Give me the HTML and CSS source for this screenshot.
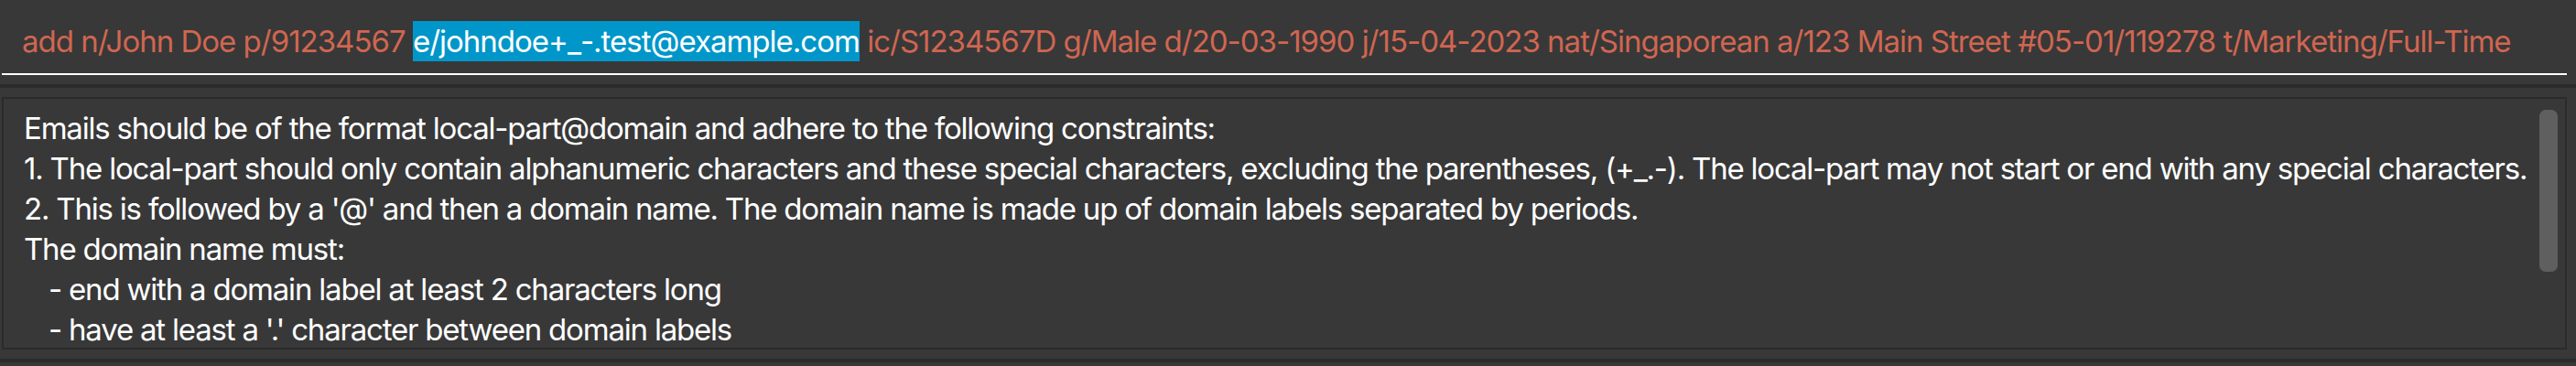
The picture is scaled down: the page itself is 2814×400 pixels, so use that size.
FILE: index.html
```html
<!DOCTYPE html>
<html>
<head>
<meta charset="utf-8">
<link rel="stylesheet" href="styles.css">
</head>
<body>
<div class="app">
  <div class="command-pane">
    <div class="command-field">
      <div class="command-text">add n/John Doe p/91234567 <span class="selected">e/johndoe+_-.test@example.com</span> ic/S1234567D g/Male d/20-03-1990 j/15-04-2023 nat/Singaporean a/123 Main Street #05-01/119278 t/Marketing/Full-Time</div>
    </div>
  </div>
  <div class="divider"></div>
  <div class="result-pane">
    <div class="result-box">
      <div class="result-text">
        <div class="line">Emails should be of the format local-part@domain and adhere to the following constraints:</div>
        <div class="line">1. The local-part should only contain alphanumeric characters and these special characters, excluding the parentheses, (+_.-). The local-part may not start or end with any special characters.</div>
        <div class="line">2. This is followed by a '@' and then a domain name. The domain name is made up of domain labels separated by periods.</div>
        <div class="line">The domain name must:</div>
        <div class="line indent">- end with a domain label at least 2 characters long</div>
        <div class="line indent">- have at least a '.' character between domain labels</div>
      </div>
      <div class="scroll-thumb"></div>
    </div>
  </div>
  <div class="divider"></div>
</div>
</body>
</html>
```
FILE: styles.css
```css
html, body {
  margin: 0;
  padding: 0;
  background: #383838;
}

body {
  width: 2814px;
  height: 400px;
  overflow: hidden;
  font-family: "Inter", "Noto Sans", sans-serif;
}

.app {
  display: flex;
  flex-direction: column;
}

.command-pane {
  height: 92px;
  padding: 0 10px 0 2px;
  box-sizing: border-box;
}

.command-field {
  height: 82px;
  box-sizing: border-box;
  border-bottom: 2px solid #ffffff;
  padding: 23px 0 0 22px;
}

.command-text {
  font-size: 33px;
  line-height: 44px;
  color: #d06651;
  white-space: nowrap;
  letter-spacing: -1px;
}

.selected {
  display: inline-block;
  background: #0096c9;
  color: #ffffff;
  line-height: 44px;
}

.divider {
  height: 4px;
  background: #2b2b2b;
}

.result-pane {
  padding: 10px 10px 10px 2px;
}

.result-box {
  position: relative;
  height: 276px;
  box-sizing: border-box;
  border: 2px solid #2b2b2b;
  padding: 10px 0 0 22px;
  overflow: hidden;
}

.result-text {
  font-size: 33px;
  line-height: 44px;
  color: #ffffff;
  letter-spacing: -1.2px;
}

.line {
  white-space: nowrap;
}

.indent {
  padding-left: 27px;
}

.scroll-thumb {
  position: absolute;
  top: 12px;
  right: 8px;
  width: 20px;
  height: 177px;
  border-radius: 7px;
  background: #5f5f5f;
}
```
